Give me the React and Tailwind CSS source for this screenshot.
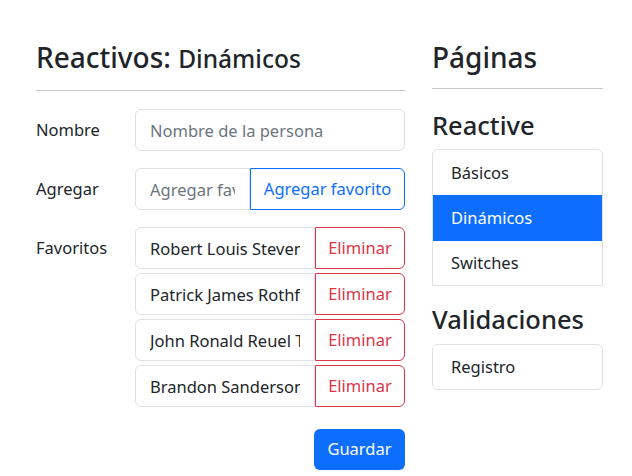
import { useState } from "react";

const favoritosIniciales = [
  "Robert Louis Stevenson",
  "Patrick James Rothfuss",
  "John Ronald Reuel Tolkien",
  "Brandon Sanderson",
];

const Label = ({ children }) => (
  <label className="w-[99px] shrink-0 leading-[42px]">{children}</label>
);

const App = () => {
  const [favoritos, setFavoritos] = useState(favoritosIniciales);
  const [nuevo, setNuevo] = useState("");

  const eliminar = (i) => setFavoritos(favoritos.filter((_, idx) => idx !== i));

  return (
    <div className="min-h-[476px] bg-white font-['Noto_Sans',sans-serif] text-[16.5px] text-[#212529]">
      <div className="flex gap-[27px] pl-[36px] pt-[38px]">
        {/* Formulario */}
        <div className="w-[369px]">
          <h2 className="text-[28px] font-medium leading-[38px]">
            Reactivos: <small className="text-[24.5px]">Dinámicos</small>
          </h2>
          <hr className="mt-[12px] mb-[18px] border-t border-[#c8c8c8]" />

          <div className="flex">
            <Label>Nombre</Label>
            <input
              className="h-[42px] w-full rounded-[6px] border border-[#dee2e6] px-[14px] placeholder-[#6c757d] outline-none"
              placeholder="Nombre de la persona"
            />
          </div>

          <div className="mt-[17px] flex">
            <Label>Agregar</Label>
            <div className="flex w-full">
              <input
                value={nuevo}
                onChange={(e) => setNuevo(e.target.value)}
                className="h-[42px] w-[115px] min-w-0 rounded-l-[6px] border border-[#dee2e6] px-[14px] placeholder-[#6c757d] outline-none"
                placeholder="Agregar favorito"
              />
              <button className="h-[42px] flex-1 whitespace-nowrap rounded-r-[6px] border border-[#0d6efd] px-[10px] text-[#0d6efd]">
                Agregar favorito
              </button>
            </div>
          </div>

          <div className="mt-[17px] flex">
            <Label>Favoritos</Label>
            <div className="flex w-full flex-col gap-[4px]">
              {favoritos.map((fav, i) => (
                <div key={fav} className="flex">
                  <input
                    defaultValue={fav}
                    className="h-[42px] w-[180px] min-w-0 rounded-l-[6px] border border-[#dee2e6] px-[14px] outline-none"
                  />
                  <button
                    onClick={() => eliminar(i)}
                    className="h-[42px] flex-1 rounded-r-[6px] border border-[#dc3545] text-[#dc3545]"
                  >
                    Eliminar
                  </button>
                </div>
              ))}
            </div>
          </div>

          <div className="mt-[22px] flex justify-end">
            <button className="h-[41px] w-[91px] rounded-[6px] bg-[#0d6efd] text-white">
              Guardar
            </button>
          </div>
        </div>

        {/* Menú lateral */}
        <div className="w-[171px]">
          <h2 className="text-[28px] font-medium leading-[38px]">Páginas</h2>
          <hr className="mt-[12px] mb-[20px] border-t border-[#c8c8c8]" />

          <h3 className="text-[25.5px] font-medium leading-[32px]">Reactive</h3>
          <ul className="mt-[8px] overflow-hidden rounded-t-[6px] border border-[#dee2e6]">
            <li className="h-[45px] px-[18px] leading-[45px]">Básicos</li>
            <li className="h-[46px] bg-[#0d6efd] px-[18px] leading-[46px] text-white">
              Dinámicos
            </li>
            <li className="h-[44px] px-[18px] leading-[44px]">Switches</li>
          </ul>

          <h3 className="mt-[17px] text-[25.5px] font-medium leading-[32px]">
            Validaciones
          </h3>
          <ul className="mt-[9px] rounded-[6px] border border-[#dee2e6]">
            <li className="h-[44px] px-[18px] leading-[44px]">Registro</li>
          </ul>
        </div>
      </div>
    </div>
  );
};

export default App;
